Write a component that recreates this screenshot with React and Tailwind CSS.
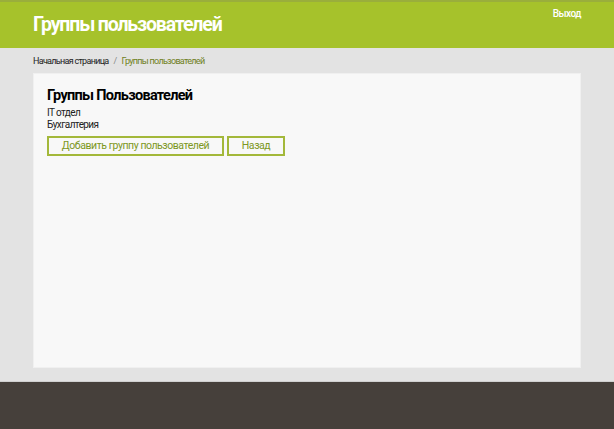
export default function App() {
  return (
    <div className="min-h-screen flex flex-col bg-[#e3e3e3]" style={{ fontFamily: "Roboto, 'Liberation Sans', sans-serif" }}>
      {/* Header */}
      <header className="h-[48px] bg-[#a6c22b] border-t-2 border-[#9aae3c] flex justify-between px-[33px]">
        <h1 className="text-[19.5px] font-bold text-white leading-none mt-[13px] tracking-[-1.15px]">Группы пользователей</h1>
        <a className="text-[10px] font-medium text-white mt-[4px] tracking-[-0.5px]">Выход</a>
      </header>

      {/* Main */}
      <main className="flex-1 px-[33px] pb-[13px]">
        <nav className="text-[9px] tracking-[-0.7px] pt-[7px] h-[25px] flex gap-[5px]">
          <span className="text-[#222]">Начальная страница</span>
          <span className="text-[#888]">/</span>
          <span className="text-[#6f7f22]">Группы пользователей</span>
        </nav>

        <div className="bg-[#f8f8f8] border border-[#f0f0f0] h-[295px] px-[13px] pt-[13px]">
          <h2 className="text-[14.5px] font-bold text-black leading-[18px] tracking-[-0.7px]">Группы Пользователей</h2>
          <ul className="text-[10px] text-[#222] leading-[12px] mt-[2px] tracking-[-0.6px]">
            <li>IT отдел</li>
            <li>Бухгалтерия</li>
          </ul>
          <div className="flex gap-[3px] mt-[5px]">
            <button className="h-[20px] w-[177px] border-2 border-[#a3b83a] text-[10.5px] tracking-[-0.45px] text-[#7c9722]">
              Добавить группу пользователей
            </button>
            <button className="h-[20px] w-[58px] border-2 border-[#a3b83a] text-[10.5px] tracking-[-0.45px] text-[#7c9722]">
              Назад
            </button>
          </div>
        </div>
      </main>

      {/* Footer */}
      <footer className="h-[48px] bg-[#46403b] border-t border-[#d0d0d0]" />
    </div>
  );
}
